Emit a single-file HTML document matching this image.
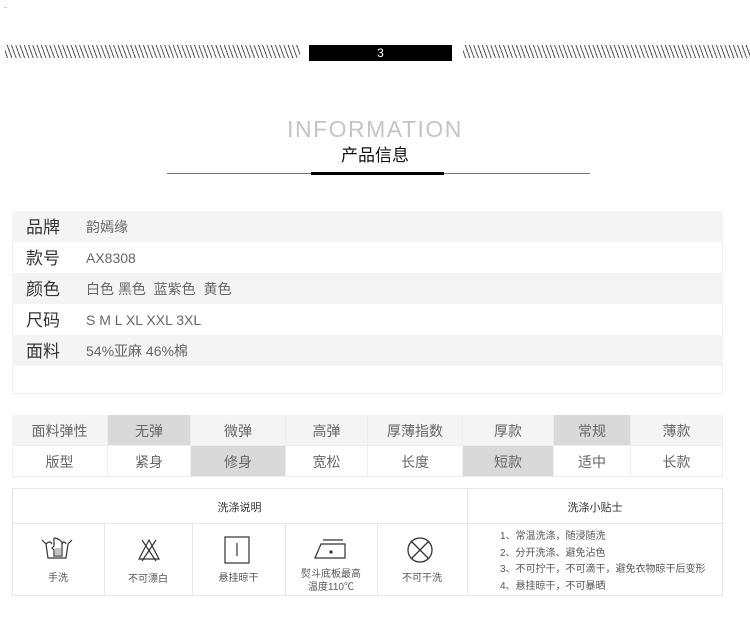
<!DOCTYPE html>
<html><head><meta charset="utf-8"><style>
*{margin:0;padding:0;box-sizing:border-box}
body{width:750px;height:624px;background:#fff;position:relative;overflow:hidden;font-family:"Liberation Sans","Noto Sans CJK SC",sans-serif;color:#555}
.a{position:absolute}
.hatch{position:absolute;height:13px;background:repeating-linear-gradient(70deg,#fff 0 2px,#555 2px 3px,#fff 3px 4px)}
.row{position:absolute;left:12px;width:711px;height:31px;font-size:14px;line-height:33px}
.row b{font-weight:normal;font-size:17px;color:#333;position:absolute;left:14px}
.row span{position:absolute;left:74px;color:#666}
.c{position:absolute;text-align:center;font-size:14px;color:#666;border-right:1px solid #eee;border-bottom:1px solid #eee}
.t{position:absolute;font-size:10px;color:#555;text-align:center}
</style></head><body>
<div class="a" style="left:4px;top:7px;width:3px;height:1px;background:#ccc"></div>
<div class="hatch" style="left:5px;top:45px;width:295px"></div>
<div class="a" style="left:309px;top:45px;width:143px;height:16px;background:#000;color:#fff;font-size:12px;text-align:center;line-height:16px">3</div>
<div class="hatch" style="left:463px;top:45px;width:287px"></div>
<div class="a" style="left:0;width:750px;top:116px;text-align:center;font-size:23px;color:#c4c4c4;letter-spacing:1.5px">INFORMATION</div>
<div class="a" style="left:0;width:750px;top:141px;text-align:center;font-size:17px;color:#111">产品信息</div>
<div class="a" style="left:167px;top:173px;width:423px;height:1px;background:#777"></div>
<div class="a" style="left:311px;top:172px;width:133px;height:3px;background:#000"></div>

<div class="a" style="left:12px;top:211px;width:711px;height:183px;border:1px solid #eee"></div>
<div class="row" style="top:211px;background:#f4f4f4"><b>品牌</b><span>韵嫣缘</span></div>
<div class="row" style="top:242px"><b>款号</b><span>AX8308</span></div>
<div class="row" style="top:273px;background:#f4f4f4"><b>颜色</b><span>白色 黑色&nbsp; 蓝紫色&nbsp; 黄色</span></div>
<div class="row" style="top:304px"><b>尺码</b><span>S M L XL XXL 3XL</span></div>
<div class="row" style="top:335px;background:#f4f4f4"><b>面料</b><span>54%亚麻 46%棉</span></div>

<div class="a" style="left:12px;top:415px;width:711px;height:62px;border:1px solid #eee;border-right:none;border-bottom:none"></div>
<div class="c" style="left:12px;top:415px;width:96px;height:31px;line-height:33px;background:#f4f4f4">面料弹性</div>
<div class="c" style="left:108px;top:415px;width:83px;height:31px;line-height:33px;background:#d9d9d9">无弹</div>
<div class="c" style="left:191px;top:415px;width:95px;height:31px;line-height:33px;background:#f4f4f4">微弹</div>
<div class="c" style="left:286px;top:415px;width:82px;height:31px;line-height:33px;background:#f4f4f4">高弹</div>
<div class="c" style="left:368px;top:415px;width:95px;height:31px;line-height:33px;background:#f4f4f4">厚薄指数</div>
<div class="c" style="left:463px;top:415px;width:91px;height:31px;line-height:33px;background:#f4f4f4">厚款</div>
<div class="c" style="left:554px;top:415px;width:77px;height:31px;line-height:33px;background:#d9d9d9">常规</div>
<div class="c" style="left:631px;top:415px;width:92px;height:31px;line-height:33px;background:#f4f4f4">薄款</div>
<div class="c" style="left:12px;top:446px;width:96px;height:31px;line-height:33px">版型</div>
<div class="c" style="left:108px;top:446px;width:83px;height:31px;line-height:33px">紧身</div>
<div class="c" style="left:191px;top:446px;width:95px;height:31px;line-height:33px;background:#d9d9d9">修身</div>
<div class="c" style="left:286px;top:446px;width:82px;height:31px;line-height:33px">宽松</div>
<div class="c" style="left:368px;top:446px;width:95px;height:31px;line-height:33px">长度</div>
<div class="c" style="left:463px;top:446px;width:91px;height:31px;line-height:33px;background:#d9d9d9">短款</div>
<div class="c" style="left:554px;top:446px;width:77px;height:31px;line-height:33px">适中</div>
<div class="c" style="left:631px;top:446px;width:92px;height:31px;line-height:33px">长款</div>

<div class="a" style="left:12px;top:488px;width:711px;height:108px;border:1px solid #e6e6e6"></div>
<div class="a" style="left:12px;top:523px;width:711px;height:1px;background:#e6e6e6"></div>
<div class="a" style="left:467px;top:488px;width:1px;height:108px;background:#e6e6e6"></div>
<div class="a" style="left:104px;top:523px;width:1px;height:73px;background:#e6e6e6"></div>
<div class="a" style="left:192px;top:523px;width:1px;height:73px;background:#e6e6e6"></div>
<div class="a" style="left:285px;top:523px;width:1px;height:73px;background:#e6e6e6"></div>
<div class="a" style="left:377px;top:523px;width:1px;height:73px;background:#e6e6e6"></div>
<div class="t" style="left:12px;width:455px;top:499px;font-size:11px;color:#333">洗涤说明</div>
<div class="t" style="left:467px;width:256px;top:499px;font-size:11px;color:#333">洗涤小贴士</div>

<svg class="a" style="left:40px;top:536px" width="34" height="28" viewBox="0 0 34 28" fill="none" stroke="#333" stroke-width="1.2">
<path d="M2 4 L6 8 L8 22 L26 22 L28 8 L32 4"/><path d="M6 8 Q10 4 12 8"/><path d="M26 8 Q24 4 22 8"/>
<path d="M14 2 L14 10 L12 12 L14 14 L14 20 L22 20 L22 6 Q18 2 14 2"/><path d="M16 12v8M18 12v8M20 12v8" stroke="#999"/>
</svg>
<svg class="a" style="left:136px;top:537px" width="26" height="26" viewBox="0 0 26 26" fill="none" stroke="#333" stroke-width="1.2">
<path d="M13 3 L3 22 L23 22 Z"/><path d="M6 3 L20 24 M20 3 L6 24"/></svg>
<svg class="a" style="left:224px;top:536px" width="26" height="28" viewBox="0 0 26 28" fill="none" stroke="#333" stroke-width="1.2">
<rect x="1" y="1" width="24" height="26"/><path d="M13 7v13"/></svg>
<svg class="a" style="left:313px;top:538px" width="36" height="22" viewBox="0 0 36 22" fill="none" stroke="#333" stroke-width="1.2">
<path d="M2 20 L8 6 L32 6 L32 20 Z"/><path d="M10 2 L30 2"/><circle cx="18" cy="14" r="1" fill="#333"/></svg>
<svg class="a" style="left:406px;top:536px" width="28" height="28" viewBox="0 0 28 28" fill="none" stroke="#333" stroke-width="1.3">
<circle cx="14" cy="14" r="12"/><path d="M5 5 L23 23 M23 5 L5 23"/></svg>
<div class="t" style="left:12px;width:92px;top:569px">手洗</div>
<div class="t" style="left:104px;width:88px;top:570px">不可漂白</div>
<div class="t" style="left:192px;width:93px;top:569px">悬挂晾干</div>
<div class="t" style="left:285px;width:92px;top:568px;line-height:13px">熨斗底板最高<br>温度110℃</div>
<div class="t" style="left:377px;width:90px;top:569px">不可干洗</div>
<div class="t" style="left:500px;top:529px;text-align:left;line-height:16.5px">1、常温洗涤，随浸随洗<br>2、分开洗涤、避免沾色<br>3、不可拧干，不可滴干，避免衣物晾干后变形<br>4、悬挂晾干，不可暴晒</div>
</body></html>
